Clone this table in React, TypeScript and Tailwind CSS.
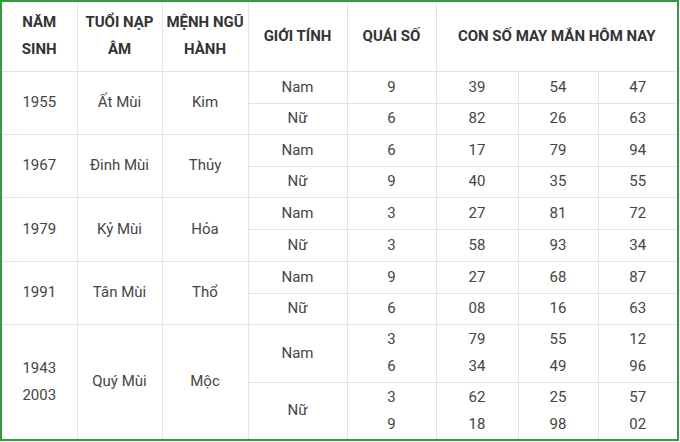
const rows = [
  { year: ["1955"], tuoi: "Ất Mùi", menh: "Kim", sub: [
    { gt: "Nam", qs: ["9"], n: [["39"], ["54"], ["47"]], h: "h-[32px]" },
    { gt: "Nữ", qs: ["6"], n: [["82"], ["26"], ["63"]], h: "h-[31px]" },
  ] },
  { year: ["1967"], tuoi: "Đinh Mùi", menh: "Thủy", sub: [
    { gt: "Nam", qs: ["6"], n: [["17"], ["79"], ["94"]], h: "h-[32px]" },
    { gt: "Nữ", qs: ["9"], n: [["40"], ["35"], ["55"]], h: "h-[31px]" },
  ] },
  { year: ["1979"], tuoi: "Kỷ Mùi", menh: "Hỏa", sub: [
    { gt: "Nam", qs: ["3"], n: [["27"], ["81"], ["72"]], h: "h-[32px]" },
    { gt: "Nữ", qs: ["3"], n: [["58"], ["93"], ["34"]], h: "h-[32px]" },
  ] },
  { year: ["1991"], tuoi: "Tân Mùi", menh: "Thổ", sub: [
    { gt: "Nam", qs: ["9"], n: [["27"], ["68"], ["87"]], h: "h-[32px]" },
    { gt: "Nữ", qs: ["6"], n: [["08"], ["16"], ["63"]], h: "h-[31px]" },
  ] },
  { year: ["1943", "2003"], tuoi: "Quý Mùi", menh: "Mộc", sub: [
    { gt: "Nam", qs: ["3", "6"], n: [["79", "34"], ["55", "49"], ["12", "96"]], h: "h-[58px]" },
    { gt: "Nữ", qs: ["3", "9"], n: [["62", "18"], ["25", "98"], ["57", "02"]], h: "h-[57px]" },
  ] },
];

function Lines({ items }: { items: string[] }) {
  return (
    <>
      {items.map((t) => (
        <div key={t}>{t}</div>
      ))}
    </>
  );
}

export default function App() {
  const cell = "border border-[#e4e4e4] text-center align-middle p-0";
  const head = cell + " font-bold text-[#333]";
  return (
    <div className="w-[679px] h-[441px] border-2 border-[#2f9c3f] bg-white overflow-hidden">
      <table className="table-fixed border-collapse border-hidden w-[675px] text-[15px] leading-[27px] text-[#454545] font-['Roboto',sans-serif]">
        <colgroup>
          <col className="w-[75px]" />
          <col className="w-[85px]" />
          <col className="w-[86px]" />
          <col className="w-[99px]" />
          <col className="w-[89px]" />
          <col className="w-[82px]" />
          <col className="w-[80px]" />
          <col className="w-[79px]" />
        </colgroup>
        <thead>
          <tr className="h-[69px]">
            <th className={head}>NĂM<br />SINH</th>
            <th className={head}>TUỔI NẠP<br />ÂM</th>
            <th className={head}>MỆNH NGŨ<br />HÀNH</th>
            <th className={head}>GIỚI TÍNH</th>
            <th className={head}>QUÁI SỐ</th>
            <th className={head} colSpan={3}>CON SỐ MAY MẮN HÔM NAY</th>
          </tr>
        </thead>
        <tbody>
          {rows.map((r) =>
            r.sub.map((s, i) => (
              <tr key={r.tuoi + s.gt} className={s.h}>
                {i === 0 && (
                  <>
                    <td className={cell} rowSpan={2}><Lines items={r.year} /></td>
                    <td className={cell} rowSpan={2}>{r.tuoi}</td>
                    <td className={cell} rowSpan={2}>{r.menh}</td>
                  </>
                )}
                <td className={cell}>{s.gt}</td>
                <td className={cell}><Lines items={s.qs} /></td>
                {s.n.map((col, j) => (
                  <td key={j} className={cell}><Lines items={col} /></td>
                ))}
              </tr>
            ))
          )}
        </tbody>
      </table>
    </div>
  );
}
